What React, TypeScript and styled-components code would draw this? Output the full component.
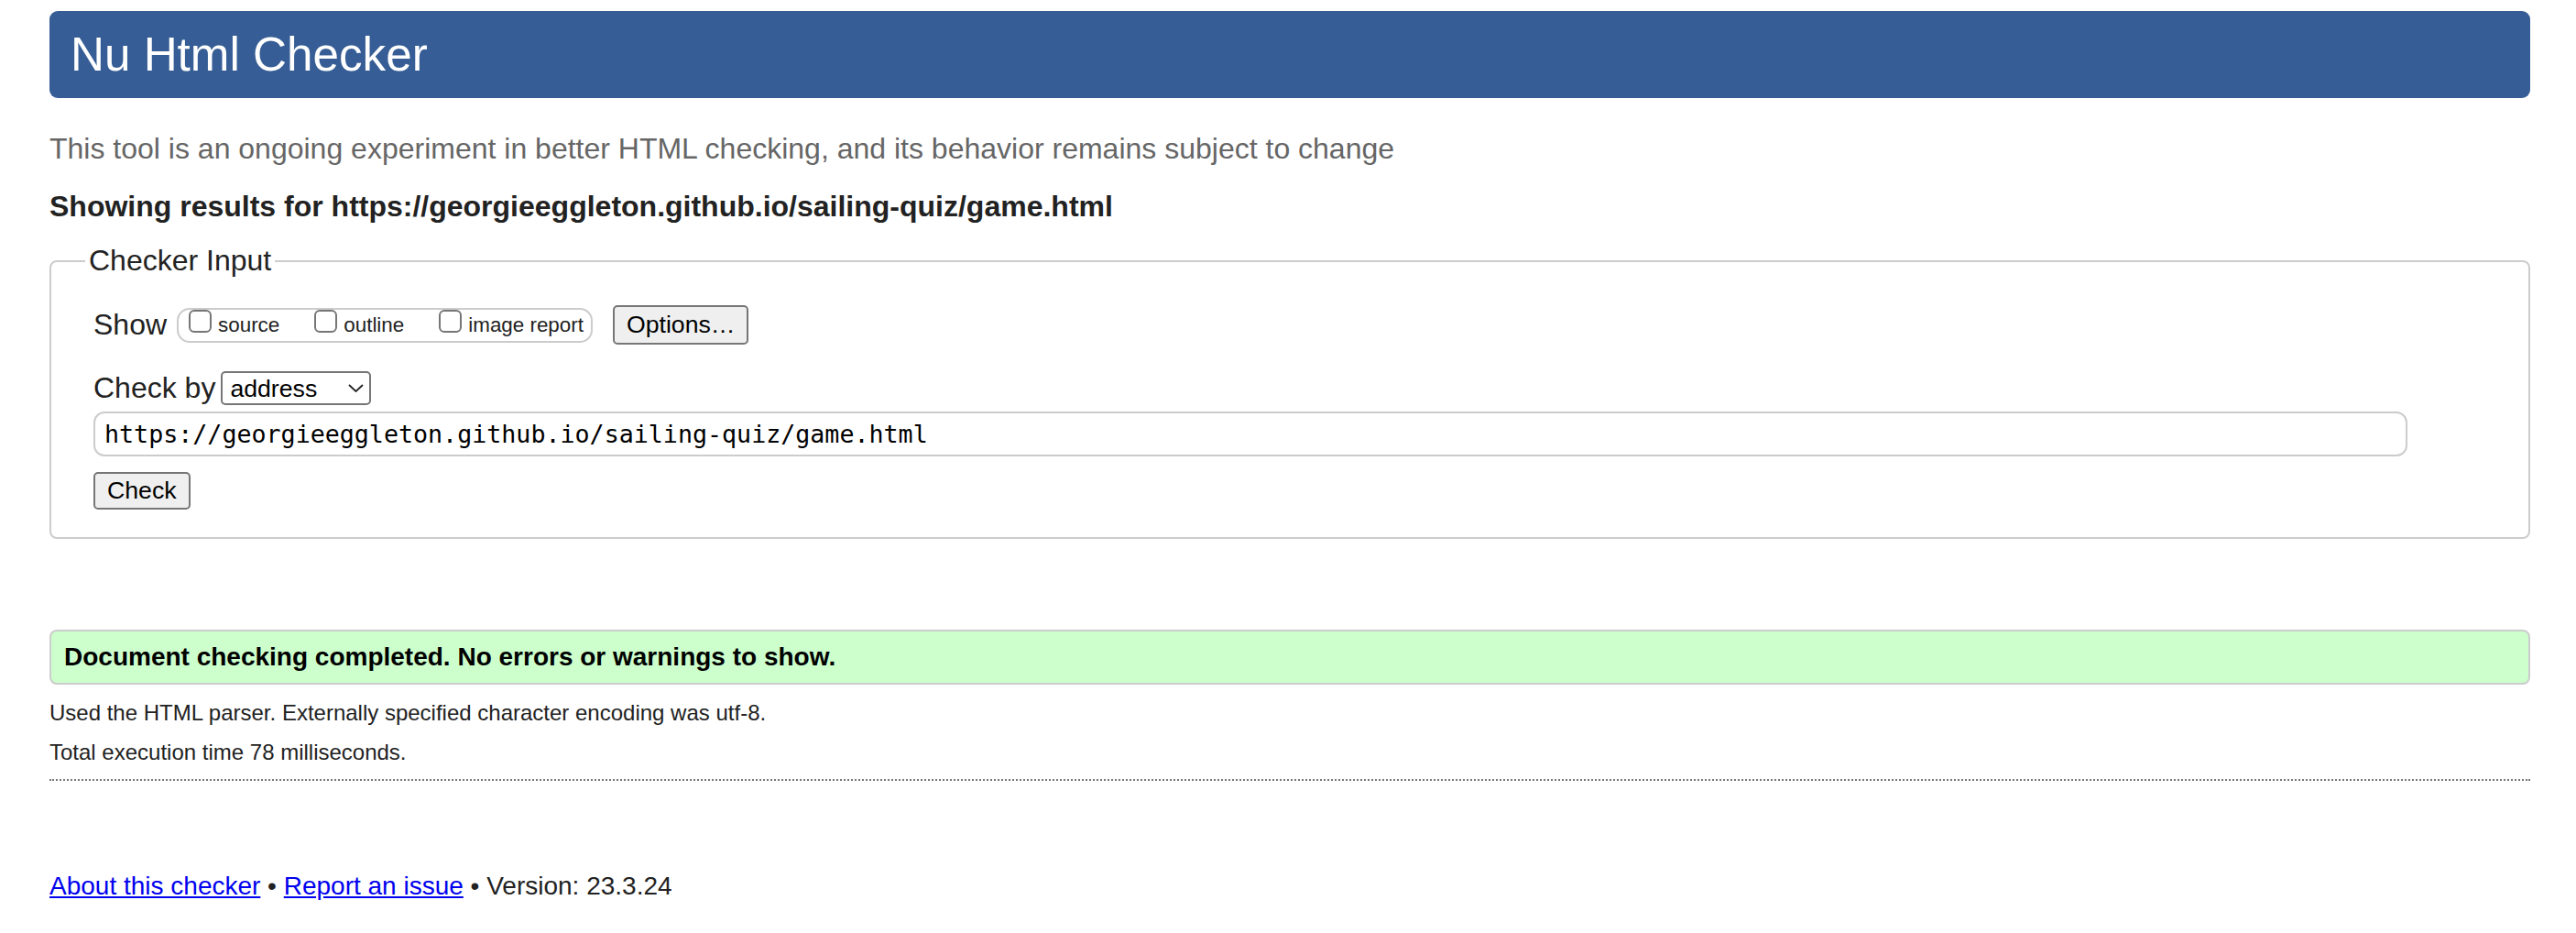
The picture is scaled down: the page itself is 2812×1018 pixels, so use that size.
import React from "react";
import styled, { createGlobalStyle } from "styled-components";

const GlobalStyle = createGlobalStyle`
  html, body {
    margin: 0;
    padding: 0;
    background: #ffffff;
  }
  body {
    font-family: "Liberation Sans", Arial, Helvetica, sans-serif;
    color: #222222;
  }
  * { box-sizing: border-box; }
`;

const Page = styled.div`
  padding: 12px 50px 40px 54px;
  display: flex;
  flex-direction: column;
  align-items: stretch;
`;

const Header = styled.h1`
  margin: 0;
  height: 95px;
  padding: 0 23px;
  background: #365d95;
  border-radius: 9px;
  color: #ffffff;
  font-size: 51.2px;
  font-weight: normal;
  line-height: 95px;
`;

const Subhead = styled.p`
  margin: 37px 0 0;
  font-size: 32px;
  line-height: 37px;
  color: #666666;
`;

const Showing = styled.p`
  margin: 26px 0 0;
  font-size: 32px;
  line-height: 37px;
  font-weight: bold;
  color: #222222;
`;

const Form = styled.form`
  margin: 22px 0 0;
`;

const Fieldset = styled.fieldset`
  margin: 0;
  min-width: 0;
  padding: 0 40px 30px 46px;
  border: 2px solid #cccccc;
  border-radius: 8px;
  display: flex;
  flex-direction: column;
  align-items: flex-start;
`;

const Legend = styled.legend`
  margin-left: -9px;
  padding: 0 4px;
  font-size: 32px;
  line-height: 37px;
  color: #222222;
`;

const Row = styled.div<{ $top: number; $height: number }>`
  display: flex;
  align-items: center;
  margin-top: ${(p) => p.$top}px;
  height: ${(p) => p.$height}px;
`;

const RowLabel = styled.span`
  font-size: 32px;
  line-height: 37px;
  color: #222222;
`;

const OptionGroup = styled.span`
  display: inline-flex;
  align-items: center;
  gap: 38px;
  height: 38px;
  margin-left: 11px;
  padding: 0 8px 0 11px;
  border: 2px solid #cccccc;
  border-radius: 14px;
`;

const OptionLabel = styled.label`
  display: inline-flex;
  align-items: center;
  gap: 7px;
  font-size: 22.4px;
  line-height: 26px;
  color: #222222;
`;

const CheckBox = styled.input`
  appearance: none;
  -webkit-appearance: none;
  width: 25px;
  height: 25px;
  margin: 0 0 9px 0;
  border: 2px solid #767676;
  border-radius: 6px;
  background: #ffffff;
`;

const Button = styled.button<{ $left?: number; $height: number }>`
  height: ${(p) => p.$height}px;
  margin-left: ${(p) => p.$left ?? 0}px;
  padding: 0 13px;
  font-family: "Liberation Sans", Arial, Helvetica, sans-serif;
  font-size: 26.67px;
  line-height: 37px;
  color: #000000;
  background: #efefef;
  border: 2px solid #767676;
  border-radius: 5px;
`;

const SelectWrap = styled.span`
  position: relative;
  display: inline-block;
  margin-left: 6px;
`;

const Select = styled.select`
  appearance: none;
  -webkit-appearance: none;
  display: block;
  width: 164px;
  height: 37px;
  padding: 0 30px 0 8px;
  font-family: "Liberation Sans", Arial, Helvetica, sans-serif;
  font-size: 26.67px;
  color: #000000;
  background: #ffffff;
  border: 2px solid #767676;
  border-radius: 5px;
`;

const Chevron = styled.svg`
  position: absolute;
  right: 8px;
  top: 14px;
  width: 17px;
  height: 9px;
  pointer-events: none;
`;

const UrlInput = styled.input`
  margin-top: 7px;
  width: 2526px;
  height: 49px;
  padding: 0 10px;
  font-family: "DejaVu Sans Mono", Menlo, monospace;
  font-size: 26.67px;
  color: #000000;
  background: #ffffff;
  border: 2px solid #cccccc;
  border-radius: 12px;
  outline: none;
`;

const SubmitRow = styled.div`
  margin-top: 17px;
  display: flex;
`;

const Success = styled.p`
  margin: 99px 0 0;
  height: 60px;
  padding: 0 14px;
  background: #ccffcc;
  border: 2px solid #cccccc;
  border-radius: 8px;
  font-size: 28px;
  font-weight: bold;
  line-height: 56px;
  color: #000000;
`;

const Details = styled.div`
  margin-top: 17px;
  padding-bottom: 15px;
  border-bottom: 2px dotted #777777;
  display: flex;
  flex-direction: column;
  gap: 15px;
`;

const DetailLine = styled.p`
  margin: 0;
  font-size: 24px;
  line-height: 28px;
  color: #222222;
`;

const Footer = styled.p`
  margin: 99px 0 0;
  font-size: 28px;
  line-height: 32px;
  color: #222222;
`;

const FooterLink = styled.a`
  color: #0000ee;
  text-decoration: underline;
`;

const options = ["source", "outline", "image report"];

export default function App() {
  const url = "https://georgieeggleton.github.io/sailing-quiz/game.html";
  return (
    <>
      <GlobalStyle />
      <Page>
        <Header>Nu Html Checker</Header>
        <Subhead>
          This tool is an ongoing experiment in better HTML checking, and its
          behavior remains subject to change
        </Subhead>
        <Showing>Showing results for {url}</Showing>
        <Form onSubmit={(e) => e.preventDefault()}>
          <Fieldset>
            <Legend>Checker Input</Legend>
            <Row $top={30} $height={43}>
              <RowLabel>Show</RowLabel>
              <OptionGroup>
                {options.map((o) => (
                  <OptionLabel key={o}>
                    <CheckBox type="checkbox" />
                    {o}
                  </OptionLabel>
                ))}
              </OptionGroup>
              <Button type="button" $left={22} $height={43}>
                Options…
              </Button>
            </Row>
            <Row $top={29} $height={37}>
              <RowLabel>Check by</RowLabel>
              <SelectWrap>
                <Select defaultValue="address">
                  <option value="address">address</option>
                  <option value="file">file upload</option>
                  <option value="text">text input</option>
                </Select>
                <Chevron viewBox="0 0 17 9">
                  <polyline
                    points="1,1 8.5,8 16,1"
                    fill="none"
                    stroke="#222"
                    strokeWidth="1.8"
                  />
                </Chevron>
              </SelectWrap>
            </Row>
            <UrlInput type="url" defaultValue={url} />
            <SubmitRow>
              <Button type="submit" $height={41}>
                Check
              </Button>
            </SubmitRow>
          </Fieldset>
        </Form>
        <Success>Document checking completed. No errors or warnings to show.</Success>
        <Details>
          <DetailLine>
            Used the HTML parser. Externally specified character encoding was
            utf-8.
          </DetailLine>
          <DetailLine>Total execution time 78 milliseconds.</DetailLine>
        </Details>
        <Footer>
          <FooterLink href="#about">About this checker</FooterLink> •{" "}
          <FooterLink href="#report">Report an issue</FooterLink> • Version:
          23.3.24
        </Footer>
      </Page>
    </>
  );
}
